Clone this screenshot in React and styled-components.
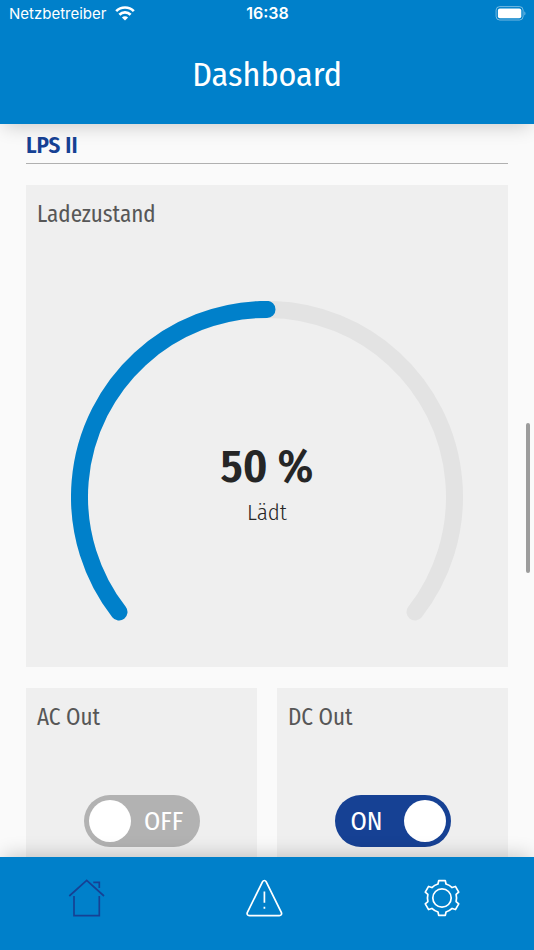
import React, { useState } from "react";
import styled, { createGlobalStyle } from "styled-components";

const GlobalStyle = createGlobalStyle`
  *,
  *::before,
  *::after {
    box-sizing: border-box;
  }
  body {
    margin: 0;
    background: #fafafa;
    font-family: "Fira Sans Condensed", "Roboto Condensed", "Noto Sans", sans-serif;
    color: #262626;
  }
`;

const Screen = styled.div`
  display: flex;
  flex-direction: column;
  height: 100vh;
  overflow: hidden;
`;

const Header = styled.header`
  z-index: 1;
  flex: none;
  background: #0080ca;
  color: #fff;
  box-shadow: 0 6px 18px -4px rgba(0, 0, 0, 0.2);
`;

const StatusBar = styled.div`
  display: grid;
  grid-template-columns: 1fr auto 1fr;
  align-items: center;
  height: 26px;
  padding: 0 8px 0 9px;
  font-family: Inter, sans-serif;
  font-size: 15px;
`;

const Carrier = styled.span`
  display: flex;
  align-items: center;
  gap: 9px;
`;

const Clock = styled.time`
  font-size: 16px;
  font-weight: 600;
`;

const Battery = styled.svg`
  justify-self: end;
`;

const PageTitle = styled.h1`
  margin: 0;
  padding: 27px 0;
  font-size: 34px;
  line-height: 44px;
  font-weight: 400;
  text-align: center;
`;

const Body = styled.div`
  position: relative;
  flex: 1;
  min-height: 0;
`;

const Content = styled.main`
  height: 100%;
  padding: 0 26px;
  overflow-y: auto;
  scrollbar-width: none;
`;

const ScrollThumb = styled.div`
  position: absolute;
  top: 299px;
  right: 4px;
  width: 4px;
  height: 150px;
  border-radius: 2px;
  background: #9c9c9c;
`;

const DeviceName = styled.h2`
  margin: 0 0 21px;
  padding: 6px 0 3px;
  border-bottom: 1px solid #b0b0b0;
  color: #164194;
  font-size: 23px;
  line-height: 30px;
  font-weight: 600;
`;

const Tiles = styled.div`
  display: grid;
  grid-template-columns: 1fr 1fr;
  gap: 21px 20px;
`;

const Tile = styled.section`
  display: flex;
  flex-direction: column;
  grid-column: ${(props) => (props.$wide ? "span 2" : "auto")};
  aspect-ratio: 1;
  background: #efefef;
`;

const TileTitle = styled.h3`
  margin: 0;
  padding: 14px 11px 0;
  color: #575757;
  font-size: 23px;
  line-height: 30px;
  font-weight: 400;
`;

const GaugeBox = styled.div`
  display: grid;
  flex: 1;
  min-height: 0;
  padding: 72px 45px 0;

  > * {
    grid-area: 1 / 1;
  }
`;

const Dial = styled.svg`
  width: 100%;
`;

const Reading = styled.div`
  padding-top: 138px;
  text-align: center;
`;

const Percent = styled.strong`
  display: block;
  font-size: 46px;
  line-height: 56px;
  font-weight: 600;
`;

const State = styled.span`
  display: block;
  font-size: 23px;
  line-height: 34px;
  font-weight: 300;
`;

const SwitchBox = styled.div`
  display: flex;
  justify-content: center;
  padding-top: 63px;
`;

const Track = styled.label`
  display: flex;
  flex-direction: ${(props) => (props.$on ? "row-reverse" : "row")};
  align-items: center;
  width: 116px;
  height: 52px;
  padding: 5px;
  border-radius: 26px;
  background: ${(props) => (props.$on ? "#164194" : "#b2b2b2")};
  color: #fff;
  font-size: 26px;
  cursor: pointer;
`;

const Knob = styled.input`
  appearance: none;
  flex: none;
  width: 42px;
  height: 42px;
  margin: 0;
  border-radius: 50%;
  background: #fff;
  cursor: pointer;
`;

const TrackText = styled.span`
  flex: 1;
  padding: ${(props) => (props.$on ? "0 10px 0 0" : "0 0 0 2px")};
  text-align: center;
`;

const TabBar = styled.nav`
  z-index: 1;
  flex: none;
  display: grid;
  grid-template-columns: repeat(3, 1fr);
  background: #0080ca;
  box-shadow: 0 -6px 18px -4px rgba(0, 0, 0, 0.2);
`;

const Tab = styled.button`
  display: flex;
  justify-content: center;
  padding: 20px 0 33px;
  border: 0;
  background: none;
  color: ${(props) => (props.$active ? "#164194" : "#fff")};
  cursor: pointer;
`;

const TabIcon = styled.svg.attrs({
  width: 42,
  height: 40,
  viewBox: "0 0 42 40",
  fill: "none",
  stroke: "currentColor",
  strokeWidth: 1.7,
  "aria-hidden": true,
})``;

// outline of a six-toothed wheel around cx/cy
const gearPath = (cx, cy) => {
  const point = (x, y, angle) => {
    const px = cx + x * Math.cos(angle) - y * Math.sin(angle);
    const py = cy + x * Math.sin(angle) + y * Math.cos(angle);
    return `${px.toFixed(2)} ${py.toFixed(2)}`;
  };
  let d = "";
  for (let i = 0; i < 6; i++) {
    const a = (i * Math.PI) / 3;
    d += i === 0 ? `M${point(-4, -14, a)}` : `A14.6 14.6 0 0 1 ${point(-4, -14, a)}`;
    d += `L${point(-3.3, -17.4, a)}L${point(3.3, -17.4, a)}L${point(4, -14, a)}`;
  }
  return `${d}A14.6 14.6 0 0 1 ${point(-4, -14, 0)}Z`;
};

const HomeIcon = () => (
  <TabIcon>
    <path d="M1.3 19 18.7 3.3 36 19M6 19v19.7h25.3V19M25.3 5.3h6v5.6" />
  </TabIcon>
);

const WarningIcon = () => (
  <TabIcon strokeLinejoin="round">
    <path d="M16.6 4.6 1.4 35.3c-.8 1.7.1 3.4 2 3.4h29.9c1.9 0 2.8-1.7 2-3.4L20.1 4.6c-.8-1.5-2.7-1.5-3.5 0Z" />
    <path d="M18.4 14.5v11.2M18.4 29.8v2" />
  </TabIcon>
);

const GearIcon = () => (
  <TabIcon strokeLinejoin="round">
    <path d={gearPath(18, 21)} />
    <circle cx="18" cy="21" r="9.2" />
  </TabIcon>
);

const WifiIcon = () => (
  <svg width="20" height="15" viewBox="0 0 20 15" fill="none" stroke="#fff" strokeWidth="2.7">
    <path d="M1.2 5.1a12.6 12.6 0 0 1 17.6 0M4.4 8.7a7.9 7.9 0 0 1 11.2 0" />
    <path d="M10 14.6 6.9 11.5a4.4 4.4 0 0 1 6.2 0Z" fill="#fff" stroke="none" />
  </svg>
);

const BatteryIcon = () => (
  <Battery width="31" height="15" viewBox="0 0 31 15">
    <rect x="1.1" y=".6" width="27" height="13.4" rx="3.6" fill="none" stroke="#fff" strokeOpacity=".45" />
    <rect x="2.9" y="2.4" width="23.4" height="9.8" rx="2" fill="#fff" />
    <path d="M29.4 5.2v4.4c1.4-.8 1.4-3.6 0-4.4Z" fill="#fff" fillOpacity=".5" />
  </Battery>
);

const Gauge = ({ value, state }) => (
  <GaugeBox>
    <Dial viewBox="0 0 392 320" fill="none" strokeWidth="17" strokeLinecap="round" aria-hidden="true">
      <path d="M48 311A187.5 187.5 0 1 1 344 311" stroke="#e3e3e3" />
      <path
        d="M48 311A187.5 187.5 0 1 1 344 311"
        stroke="#0080ca"
        pathLength="100"
        strokeDasharray={`${value} 200`}
      />
    </Dial>
    <Reading>
      <Percent>{value} %</Percent>
      <State>{state}</State>
    </Reading>
  </GaugeBox>
);

const OutputTile = ({ title, initial }) => {
  const [on, setOn] = useState(initial);

  return (
    <Tile>
      <TileTitle>{title}</TileTitle>
      <SwitchBox>
        <Track $on={on}>
          <Knob
            type="checkbox"
            role="switch"
            aria-label={title}
            checked={on}
            onChange={() => setOn(!on)}
          />
          <TrackText $on={on}>{on ? "ON" : "OFF"}</TrackText>
        </Track>
      </SwitchBox>
    </Tile>
  );
};

const TABS = [
  { name: "Dashboard", Icon: HomeIcon },
  { name: "Warnungen", Icon: WarningIcon },
  { name: "Einstellungen", Icon: GearIcon },
];

const App = () => {
  const [active, setActive] = useState("Dashboard");

  return (
    <Screen>
      <GlobalStyle />
      <Header>
        <StatusBar>
          <Carrier>
            Netzbetreiber
            <WifiIcon />
          </Carrier>
          <Clock>16:38</Clock>
          <BatteryIcon />
        </StatusBar>
        <PageTitle>Dashboard</PageTitle>
      </Header>
      <Body>
        <Content>
          <DeviceName>LPS II</DeviceName>
          <Tiles>
            <Tile $wide>
              <TileTitle>Ladezustand</TileTitle>
              <Gauge value={50} state="Lädt" />
            </Tile>
            <OutputTile title="AC Out" initial={false} />
            <OutputTile title="DC Out" initial={true} />
          </Tiles>
        </Content>
        <ScrollThumb />
      </Body>
      <TabBar>
        {TABS.map(({ name, Icon }) => (
          <Tab
            key={name}
            type="button"
            aria-label={name}
            $active={name === active}
            onClick={() => setActive(name)}
          >
            <Icon />
          </Tab>
        ))}
      </TabBar>
    </Screen>
  );
};

export default App;
